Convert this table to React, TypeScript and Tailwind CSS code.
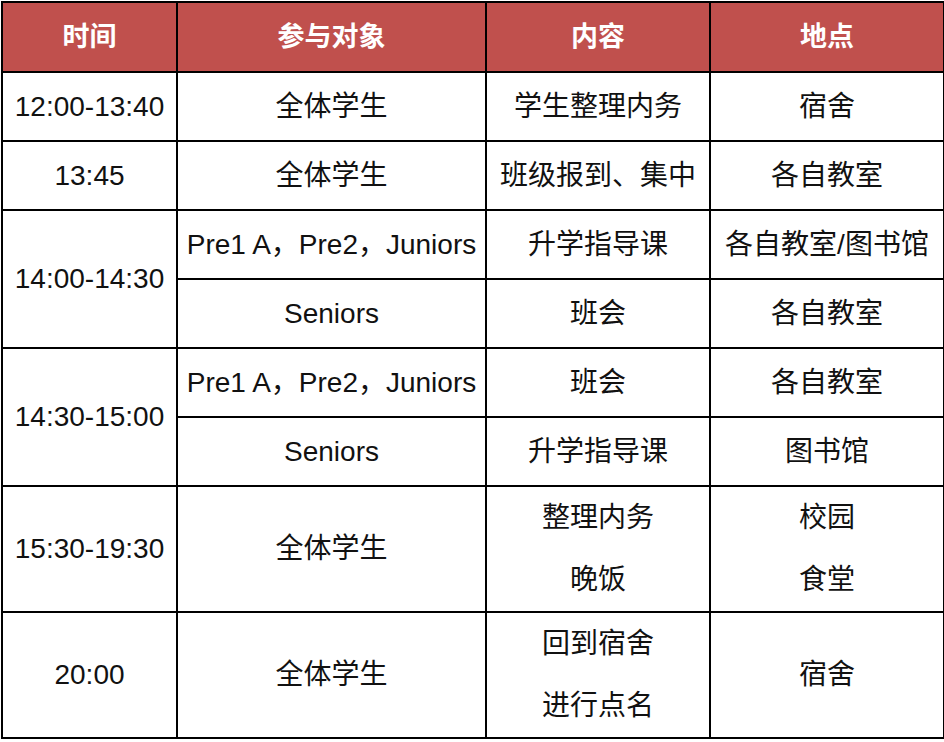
const font = "font-['Liberation_Sans','Noto_Sans_CJK_SC',sans-serif]";

const cell = "border-2 border-black text-center align-middle text-[28px] text-[#111] leading-none";

export default function App() {
    return (
        <div className={`bg-white w-[944px] h-[742px] pt-px pl-px ${font}`}>
            <table className="table-fixed border-collapse w-[942px]">
                <colgroup>
                    <col className="w-[175px]" />
                    <col className="w-[309px]" />
                    <col className="w-[224px]" />
                    <col className="w-[234px]" />
                </colgroup>
                <thead>
                    <tr className="h-[70px] bg-[#c0504d]">
                        {["时间", "参与对象", "内容", "地点"].map((h) => (
                            <th key={h} className="border-2 border-black text-white font-bold text-[27px] text-center align-middle">{h}</th>
                        ))}
                    </tr>
                </thead>
                <tbody>
                    <tr className="h-[69px]">
                        <td className={cell}>12:00-13:40</td>
                        <td className={cell}>全体学生</td>
                        <td className={cell}>学生整理内务</td>
                        <td className={cell}>宿舍</td>
                    </tr>
                    <tr className="h-[69px]">
                        <td className={cell}>13:45</td>
                        <td className={cell}>全体学生</td>
                        <td className={cell}>班级报到、集中</td>
                        <td className={cell}>各自教室</td>
                    </tr>
                    <tr className="h-[69px]">
                        <td rowSpan={2} className={cell}>14:00-14:30</td>
                        <td className={cell}>Pre1 A，Pre2，Juniors</td>
                        <td className={cell}>升学指导课</td>
                        <td className={cell}>各自教室/图书馆</td>
                    </tr>
                    <tr className="h-[69px]">
                        <td className={cell}>Seniors</td>
                        <td className={cell}>班会</td>
                        <td className={cell}>各自教室</td>
                    </tr>
                    <tr className="h-[69px]">
                        <td rowSpan={2} className={cell}>14:30-15:00</td>
                        <td className={cell}>Pre1 A，Pre2，Juniors</td>
                        <td className={cell}>班会</td>
                        <td className={cell}>各自教室</td>
                    </tr>
                    <tr className="h-[69px]">
                        <td className={cell}>Seniors</td>
                        <td className={cell}>升学指导课</td>
                        <td className={cell}>图书馆</td>
                    </tr>
                    <tr className="h-[126px]">
                        <td className={cell}>15:30-19:30</td>
                        <td className={cell}>全体学生</td>
                        <td className={cell}>
                            <div className="flex flex-col gap-[34px]">
                                <span>整理内务</span>
                                <span>晚饭</span>
                            </div>
                        </td>
                        <td className={cell}>
                            <div className="flex flex-col gap-[34px]">
                                <span>校园</span>
                                <span>食堂</span>
                            </div>
                        </td>
                    </tr>
                    <tr className="h-[126px]">
                        <td className={cell}>20:00</td>
                        <td className={cell}>全体学生</td>
                        <td className={cell}>
                            <div className="flex flex-col gap-[34px]">
                                <span>回到宿舍</span>
                                <span>进行点名</span>
                            </div>
                        </td>
                        <td className={cell}>宿舍</td>
                    </tr>
                </tbody>
            </table>
        </div>
    );
}
